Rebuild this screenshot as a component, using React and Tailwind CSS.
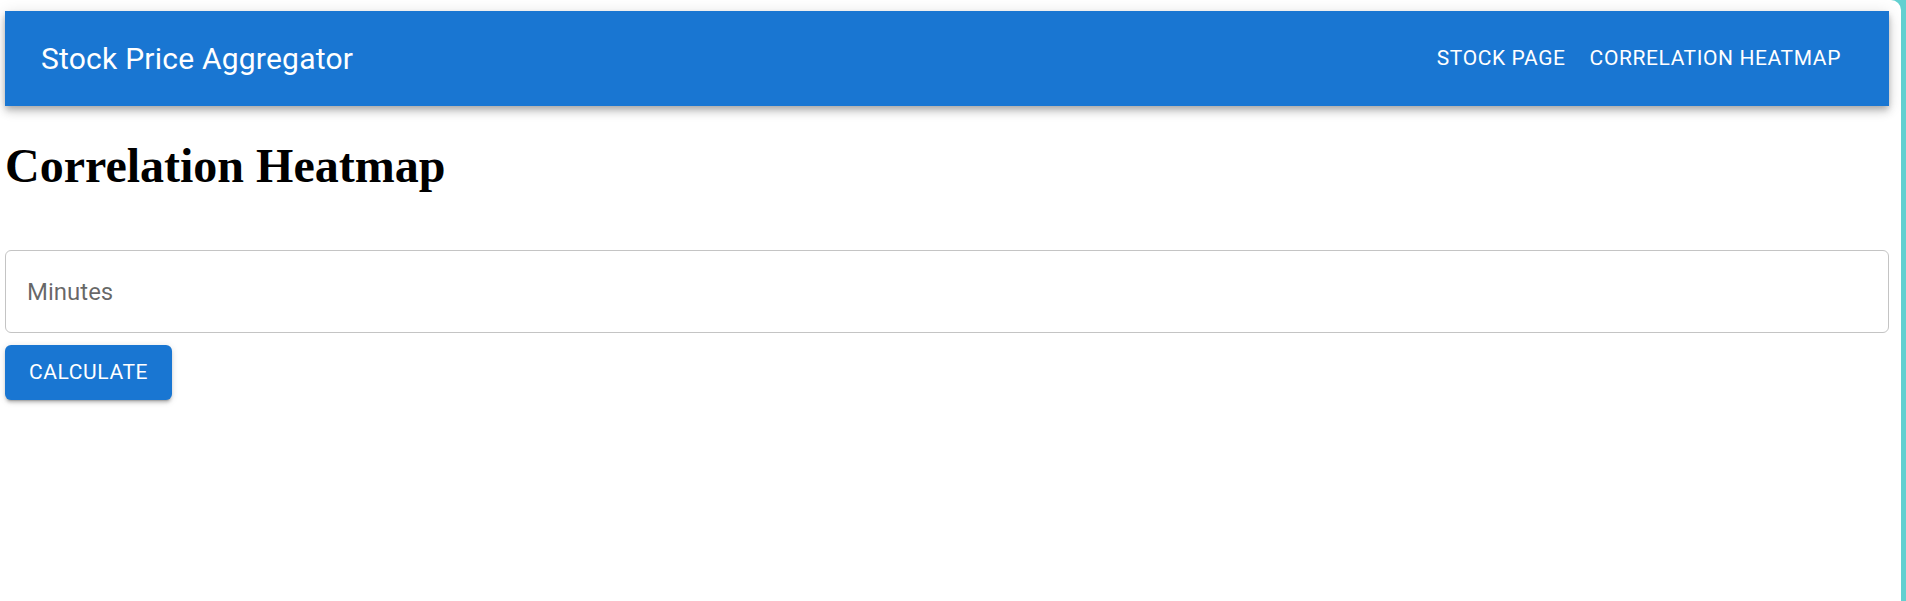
import { useState } from 'react'

export default function App() {
  const [minutes, setMinutes] = useState('')

  return (
    <div className="flex w-full h-[601px] bg-[#62d0d0] overflow-hidden">
      <div className="flex-1 mr-[5px] bg-white rounded-tr-[10px] pl-[5px] pr-[12px] pt-[11px]">
        {/* App bar */}
        <header className="flex items-center h-[95px] px-[36px] bg-[#1976d2] text-white shadow-[0_3px_6px_-1px_rgba(0,0,0,0.2),0_6px_8px_0_rgba(0,0,0,0.14),0_2px_15px_0_rgba(0,0,0,0.12)] font-['Roboto',sans-serif]">
          <div className="flex-1 text-[30px] font-normal tracking-[0.0075em] leading-[1.6]">
            Stock Price Aggregator
          </div>
          <nav className="flex items-center">
            <button className="px-[12px] py-[9px] text-[21px] font-normal uppercase tracking-[0.02857em] leading-[1.75]">
              Stock Page
            </button>
            <button className="px-[12px] py-[9px] text-[21px] font-normal uppercase tracking-[0.02857em] leading-[1.75]">
              Correlation Heatmap
            </button>
          </nav>
        </header>

        <h1 className="mt-[32px] mb-0 text-[48px] font-bold leading-[55px] text-black font-['Liberation_Serif',serif]">
          Correlation Heatmap
        </h1>

        {/* Minutes field */}
        <div className="mt-[57px] mb-[12px] h-[83px] flex items-center rounded-[6px] border border-[#c4c4c4] px-[21px] font-['Roboto',sans-serif]">
          <input
            type="number"
            placeholder="Minutes"
            value={minutes}
            onChange={(e) => setMinutes(e.target.value)}
            className="w-full bg-transparent text-[24px] text-black/85 placeholder-black/60 outline-none"
          />
        </div>

        <button className="h-[55px] px-[24px] rounded-[6px] bg-[#1976d2] text-white text-[21px] font-normal uppercase tracking-[0.02857em] font-['Roboto',sans-serif] shadow-[0_3px_1.5px_-2px_rgba(0,0,0,0.2),0_3px_3px_0_rgba(0,0,0,0.14),0_1.5px_7.5px_0_rgba(0,0,0,0.12)]">
          Calculate
        </button>
      </div>
    </div>
  )
}
